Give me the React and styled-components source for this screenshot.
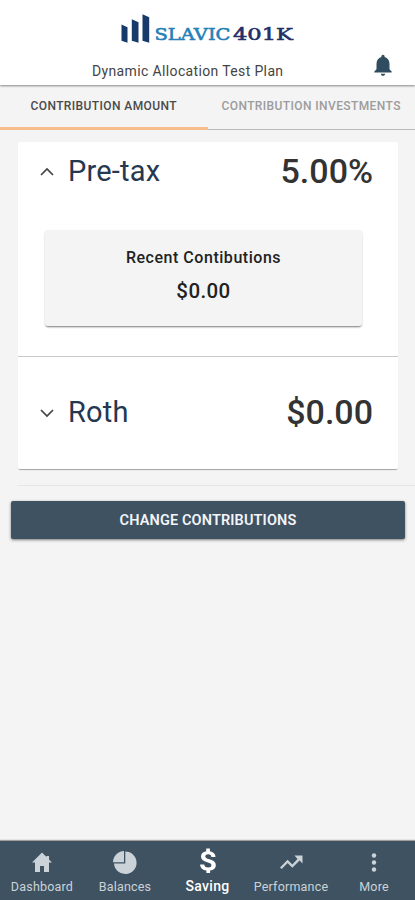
import React from "react";
import styled, { createGlobalStyle } from "styled-components";

const GlobalStyle = createGlobalStyle`
  *, *::before, *::after { box-sizing: border-box; }
  body { margin: 0; background: #f4f4f4; font-family: Roboto, "Liberation Sans", sans-serif; }
`;

const Screen = styled.div`
  width: 100%;
  height: 900px;
  display: flex;
  flex-direction: column;
  background: #f4f4f4;
  overflow: hidden;
`;

const Header = styled.header`
  height: 85px;
  flex: none;
  display: grid;
  grid-template-columns: 48px 1fr 48px;
  grid-template-rows: 54px 31px;
  background: #fff;
  box-shadow: 0 1px 2px rgba(0, 0, 0, 0.45);
  z-index: 1;
`;

const Logo = styled.svg`
  grid-column: 1 / -1;
  display: block;
`;

const PlanName = styled.div`
  grid-column: 2;
  padding-left: 44px;
  font-size: 14px;
  line-height: 35px;
  letter-spacing: 0.36px;
  color: #444;
  white-space: nowrap;
`;

const BellButton = styled.button`
  border: 0;
  padding: 0;
  background: none;
  width: 26px;
  height: 26px;
  margin-left: 3px;
  margin-top: -2px;
`;

const Tabs = styled.nav`
  height: 45px;
  flex: none;
  display: flex;
  box-shadow: inset 0 -1px #bbb;
`;

const Tab = styled.button`
  width: 50%;
  border: 0;
  border-bottom: 3px solid ${(p) => (p.$active ? "#f8bd8c" : "transparent")};
  background: none;
  padding: 0;
  font: 500 12px/40px Roboto, sans-serif;
  letter-spacing: 0.4px;
  color: ${(p) => (p.$active ? "#4a4a4a" : "#9c9c9c")};
  padding-left: ${(p) => (p.$active ? "0" : "14px")};
  text-align: ${(p) => (p.$active ? "center" : "left")};
  white-space: nowrap;
`;

const Card = styled.section`
  height: 327px;
  flex: none;
  margin: 12px 17px 0 18px;
  background: #fff;
  border-radius: 2px;
  box-shadow: 0 2px 1px -1px rgba(0, 0, 0, 0.3), 0 1px 1px rgba(0, 0, 0, 0.06);
`;

const Source = styled.div`
  height: ${(p) => (p.$open ? "215px" : "112px")};
  padding-top: ${(p) => (p.$open ? "9px" : "35px")};
  border-bottom: ${(p) => (p.$open ? "1px solid #c8c8c8" : "0")};
`;

const SourceRow = styled.div`
  height: 40px;
  display: flex;
  align-items: center;
  padding: 0 25px 0 22px;
`;

const Chevron = styled.svg`
  width: 14px;
  height: 10px;
  margin-top: 2px;
`;

const SourceName = styled.span`
  flex: 1;
  margin-left: 14px;
  font-size: 29px;
  line-height: 40px;
  letter-spacing: 0.2px;
  color: #26384f;
`;

const Amount = styled.span`
  font-size: 34px;
  font-weight: 500;
  line-height: 40px;
  color: #333;
`;

const Recent = styled.div`
  height: 96px;
  margin: 39px 36px 0 27px;
  padding-top: 16px;
  text-align: center;
  background: #f4f4f4;
  border-radius: 3px;
  box-shadow: 0 2px 2px -1px rgba(0, 0, 0, 0.4), 0 1px 2px rgba(0, 0, 0, 0.18);
  color: #222;
`;

const RecentLabel = styled.div`
  font-size: 16px;
  font-weight: 500;
  line-height: 24px;
  letter-spacing: 0.53px;
`;

const RecentValue = styled.div`
  font-size: 20.5px;
  font-weight: 500;
  line-height: 24px;
  margin-top: 9px;
  letter-spacing: 0.4px;
`;

const Rule = styled.hr`
  width: 398px;
  height: 1px;
  flex: none;
  border: 0;
  margin: 16px 0 0 17px;
  background: #e6e6e6;
`;

const ChangeButton = styled.button`
  height: 38px;
  flex: none;
  margin: 15px 10px 0 11px;
  padding: 0;
  border: 0;
  border-radius: 2px;
  background: #3f5261;
  box-shadow: 0 1px 3px rgba(0, 0, 0, 0.5);
  color: #f2f4fa;
  font: 600 14.5px/37px Roboto, sans-serif;
  letter-spacing: 0.13px;
`;

const BottomNav = styled.nav`
  height: 59px;
  flex: none;
  margin-top: auto;
  display: grid;
  grid-template-columns: repeat(5, 1fr);
  background: #3f5261;
  box-shadow: 0 -1px 1px rgba(0, 0, 0, 0.35);
`;

const NavItem = styled.button`
  border: 0;
  padding: ${(p) => (p.$active ? "9px 0 0" : "9px 0 0 1px")};
  background: none;
  display: flex;
  flex-direction: column;
  align-items: center;
  color: ${(p) => (p.$active ? "#fff" : "#cbd2d8")};
`;

const NavIcon = styled.svg`
  width: 26px;
  height: 26px;
  flex: none;
  overflow: visible;
  fill: currentColor;
`;

const NavLabel = styled.span`
  font: ${(p) => (p.$active ? "500 14px" : "400 12.5px")}/21px Roboto, sans-serif;
  letter-spacing: ${(p) => (p.$active ? "0.3px" : "0.2px")};
  white-space: nowrap;
`;

const items = [
  { label: "Dashboard", icon: <path d="M13 2.500 3 12.500h3V22h5v-6h4v6h5v-9.500h3L20 9.500V6h-2.500v1z" /> },
  { label: "Balances", icon: <><path d="M12 1v11.300H1A11.200 11.200 0 0 1 12 1Z" /><path d="M13.300 1.400A11.300 11.300 0 1 1 2 13.500h11.300Z" /></> },
  { label: "Saving", active: true, icon: <path transform="translate(0 -1.500)" d="M11.200 0h3.700v2.700c3.500.5 5.500 2.700 5.600 5.700h-4.100c-.1-1.700-1.200-2.700-3.200-2.700-1.800 0-2.900.8-2.900 2.200 0 1.300 1.100 2 4.100 2.800 4.200 1.100 6.400 2.800 6.400 6 0 3-2.200 4.900-5.700 5.300v2.600h-3.700V22c-3.800-.4-6.200-2.500-6.300-6h4.100c.2 2 1.500 3 4 3 2.100 0 3.200-.8 3.200-2.200s-.9-2.100-4.200-3c-4.100-1.100-6.200-2.800-6.200-5.800 0-2.900 1.900-4.800 5.200-5.300z" /> },
  { label: "Performance", icon: <path d="M16.500 5.500h8v8l-2.900-2.900-7.300 7.200-4.700-4.700-5.900 6L2 17.400l7.600-7.700 4.700 4.700 5.200-5.300z" /> },
  { label: "More", icon: <><circle cx="13" cy="5.500" r="2.200" /><circle cx="13" cy="12.500" r="2.200" /><circle cx="13" cy="19.500" r="2.200" /></> },
];

function ChevronIcon({ open }) {
  return (
    <Chevron viewBox="0 0 14 10" fill="none" stroke="#444" strokeWidth="1.7">
      <path d={open ? "m1 8 6-6 6 6" : "m1 2 6 6 6-6"} />
    </Chevron>
  );
}

export default function App() {
  return (
    <>
      <GlobalStyle />
      <Screen>
        <Header>
          <Logo width="415" height="54" viewBox="0 0 415 54">
            <g fill="#173a6a">
              <path d="m121.500 24.500 6 2.800v15.500l-6-2z" />
              <path d="m131.800 19.300 6.700 2.900v20.600l-6.700-2z" />
              <path d="m142.500 14.300 6.700 3v25.500l-6.700-2z" />
            </g>
            <g fontFamily="DejaVu Serif, serif" fontSize="17.500" strokeWidth="0.600">
              <text x="154.500" y="40" fill="#2680b6" stroke="#2680b6" textLength="76" lengthAdjust="spacingAndGlyphs">SLAVIC</text>
              <text x="233" y="40" fill="#222f68" stroke="#222f68" textLength="60" lengthAdjust="spacingAndGlyphs">401K</text>
            </g>
          </Logo>
          <PlanName>Dynamic Allocation Test Plan</PlanName>
          <BellButton aria-label="Notifications">
            <svg width="26" height="26" viewBox="0 0 24 24" fill="#304c60">
              <path d="M12 22c1.100 0 2-.9 2-2h-4c0 1.100.9 2 2 2zm6-6v-5c0-3.100-1.600-5.600-4.500-6.300V4a1.500 1.500 0 0 0-3 0v.7C7.600 5.400 6 7.900 6 11v5l-2 2v1h16v-1z" />
            </svg>
          </BellButton>
        </Header>
        <Tabs>
          <Tab $active>CONTRIBUTION AMOUNT</Tab>
          <Tab>CONTRIBUTION INVESTMENTS</Tab>
        </Tabs>
        <Card>
          <Source $open>
            <SourceRow>
              <ChevronIcon open />
              <SourceName>Pre-tax</SourceName>
              <Amount>5.00%</Amount>
            </SourceRow>
            <Recent>
              <RecentLabel>Recent Contibutions</RecentLabel>
              <RecentValue>$0.00</RecentValue>
            </Recent>
          </Source>
          <Source>
            <SourceRow>
              <ChevronIcon />
              <SourceName>Roth</SourceName>
              <Amount>$0.00</Amount>
            </SourceRow>
          </Source>
        </Card>
        <Rule />
        <ChangeButton>CHANGE CONTRIBUTIONS</ChangeButton>
        <BottomNav>
          {items.map((item) => (
            <NavItem key={item.label} $active={item.active}>
              <NavIcon viewBox="0 0 26 26">{item.icon}</NavIcon>
              <NavLabel $active={item.active}>{item.label}</NavLabel>
            </NavItem>
          ))}
        </BottomNav>
      </Screen>
    </>
  );
}
